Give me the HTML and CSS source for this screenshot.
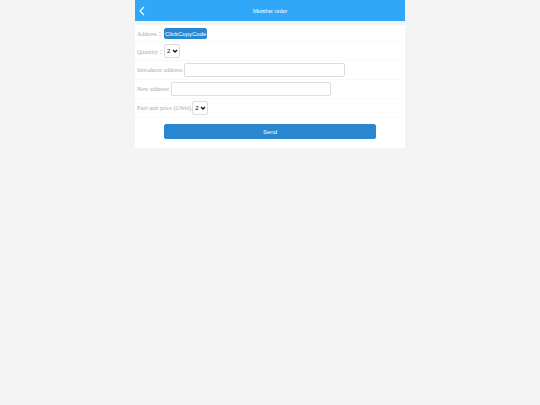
FILE: index.html
```html
<!DOCTYPE html>
<html lang="en">
<head>
    <meta charset="UTF-8">
    <meta name="viewport" content="width=device-width, initial-scale=1.0">
    <title>Member order</title>
    <link rel="stylesheet" href="styles.css">
</head>
<body>

    <div class="page">
        <!-- Header -->
        <header class="header">
            <a class="back" href="#" aria-label="Back">
                <svg viewBox="0 0 6 10" width="6" height="10"><path d="M5 1 L1 5 L5 9" fill="none" stroke="#fff" stroke-width="1.1"/></svg>
            </a>
            <h1>Member order</h1>
        </header>

        <!-- Order form -->
        <form class="order">
            <div class="row row-address">
                <span class="label-wide">Address：</span>
                <button type="button" class="copy-button">ClickCopyCode</button>
            </div>
            <div class="row">
                <label class="label-wide" for="quantity">Quantity：</label>
                <div class="select-box">
                    <select id="quantity">
                        <option>1</option>
                        <option selected>2</option>
                        <option>3</option>
                    </select>
                    <svg class="arrow" viewBox="0 0 6 4" width="6" height="4"><path d="M1 1 L3 3 L5 1" fill="none" stroke="#111" stroke-width="1.3"/></svg>
                </div>
            </div>
            <div class="row">
                <label for="introducer">Introducer address:</label>
                <input type="text" id="introducer">
            </div>
            <div class="row">
                <label for="newAddress">New address:</label>
                <input type="text" id="newAddress">
            </div>
            <div class="row">
                <label for="gas">Fuel unit price (GWei)</label>
                <div class="select-box">
                    <select id="gas">
                        <option>1</option>
                        <option selected>2</option>
                        <option>3</option>
                    </select>
                    <svg class="arrow" viewBox="0 0 6 4" width="6" height="4"><path d="M1 1 L3 3 L5 1" fill="none" stroke="#111" stroke-width="1.3"/></svg>
                </div>
            </div>
            <div class="actions">
                <button type="button" class="send-button">Send</button>
            </div>
        </form>
    </div>

</body>
</html>
```
FILE: styles.css
```css
* {
    margin: 0;
    padding: 0;
    box-sizing: border-box;
}

body {
    font-family: "Liberation Serif", "Noto Sans CJK TC", serif;
    font-size: 6px;
    background-color: #f4f4f4;
}

.page {
    width: 50%;
    margin: 0 auto;
}

/* Header */
.header {
    display: grid;
    grid-template-columns: 14px 1fr 14px;
    align-items: center;
    height: 22px;
    background-color: #30a8f7;
    border-bottom: 1px solid #e0f7ff;
    color: #fff;
}

.header h1 {
    font-size: 6px;
    font-weight: normal;
    text-align: center;
}

.back {
    display: flex;
    padding-left: 4px;
}

/* Order form */
.order {
    margin-top: 3px;
    padding-top: 1px;
    background-color: #fff;
}

.row {
    display: flex;
    align-items: center;
    gap: 1px;
    height: 19px;
    margin-right: 5px;
    padding-left: 2px;
    border-bottom: 1px solid #f9f9f9;
    color: #aaa;
}

.row-address {
    height: 16px;
}

.label-wide {
    width: 26px;
    white-space: nowrap;
}

input,
select {
    height: 14px;
    border: 1px solid #ddd;
    border-radius: 2px;
    background-color: #fff;
    font-family: "Liberation Sans", Arial, sans-serif;
    font-size: 6px;
    color: #000;
}

input {
    width: 61%;
    padding: 0 2px;
}

/* Drop-downs */
.select-box {
    display: grid;
    align-items: center;
}

.select-box select {
    grid-area: 1 / 1;
    width: 16px;
    padding-left: 2px;
    appearance: none;
}

.arrow {
    grid-area: 1 / 1;
    justify-self: end;
    margin-right: 2px;
    pointer-events: none;
}

/* Buttons */
button {
    border: 1px solid #2987d2;
    border-radius: 2px;
    background-color: #2987d2;
    color: #fff;
    font-family: "Liberation Sans", Arial, sans-serif;
    font-size: 6px;
    cursor: pointer;
}

.copy-button {
    height: 11px;
}

.actions {
    padding: 6px 29px 9px;
}

.send-button {
    display: block;
    width: 100%;
    height: 15px;
}
```
